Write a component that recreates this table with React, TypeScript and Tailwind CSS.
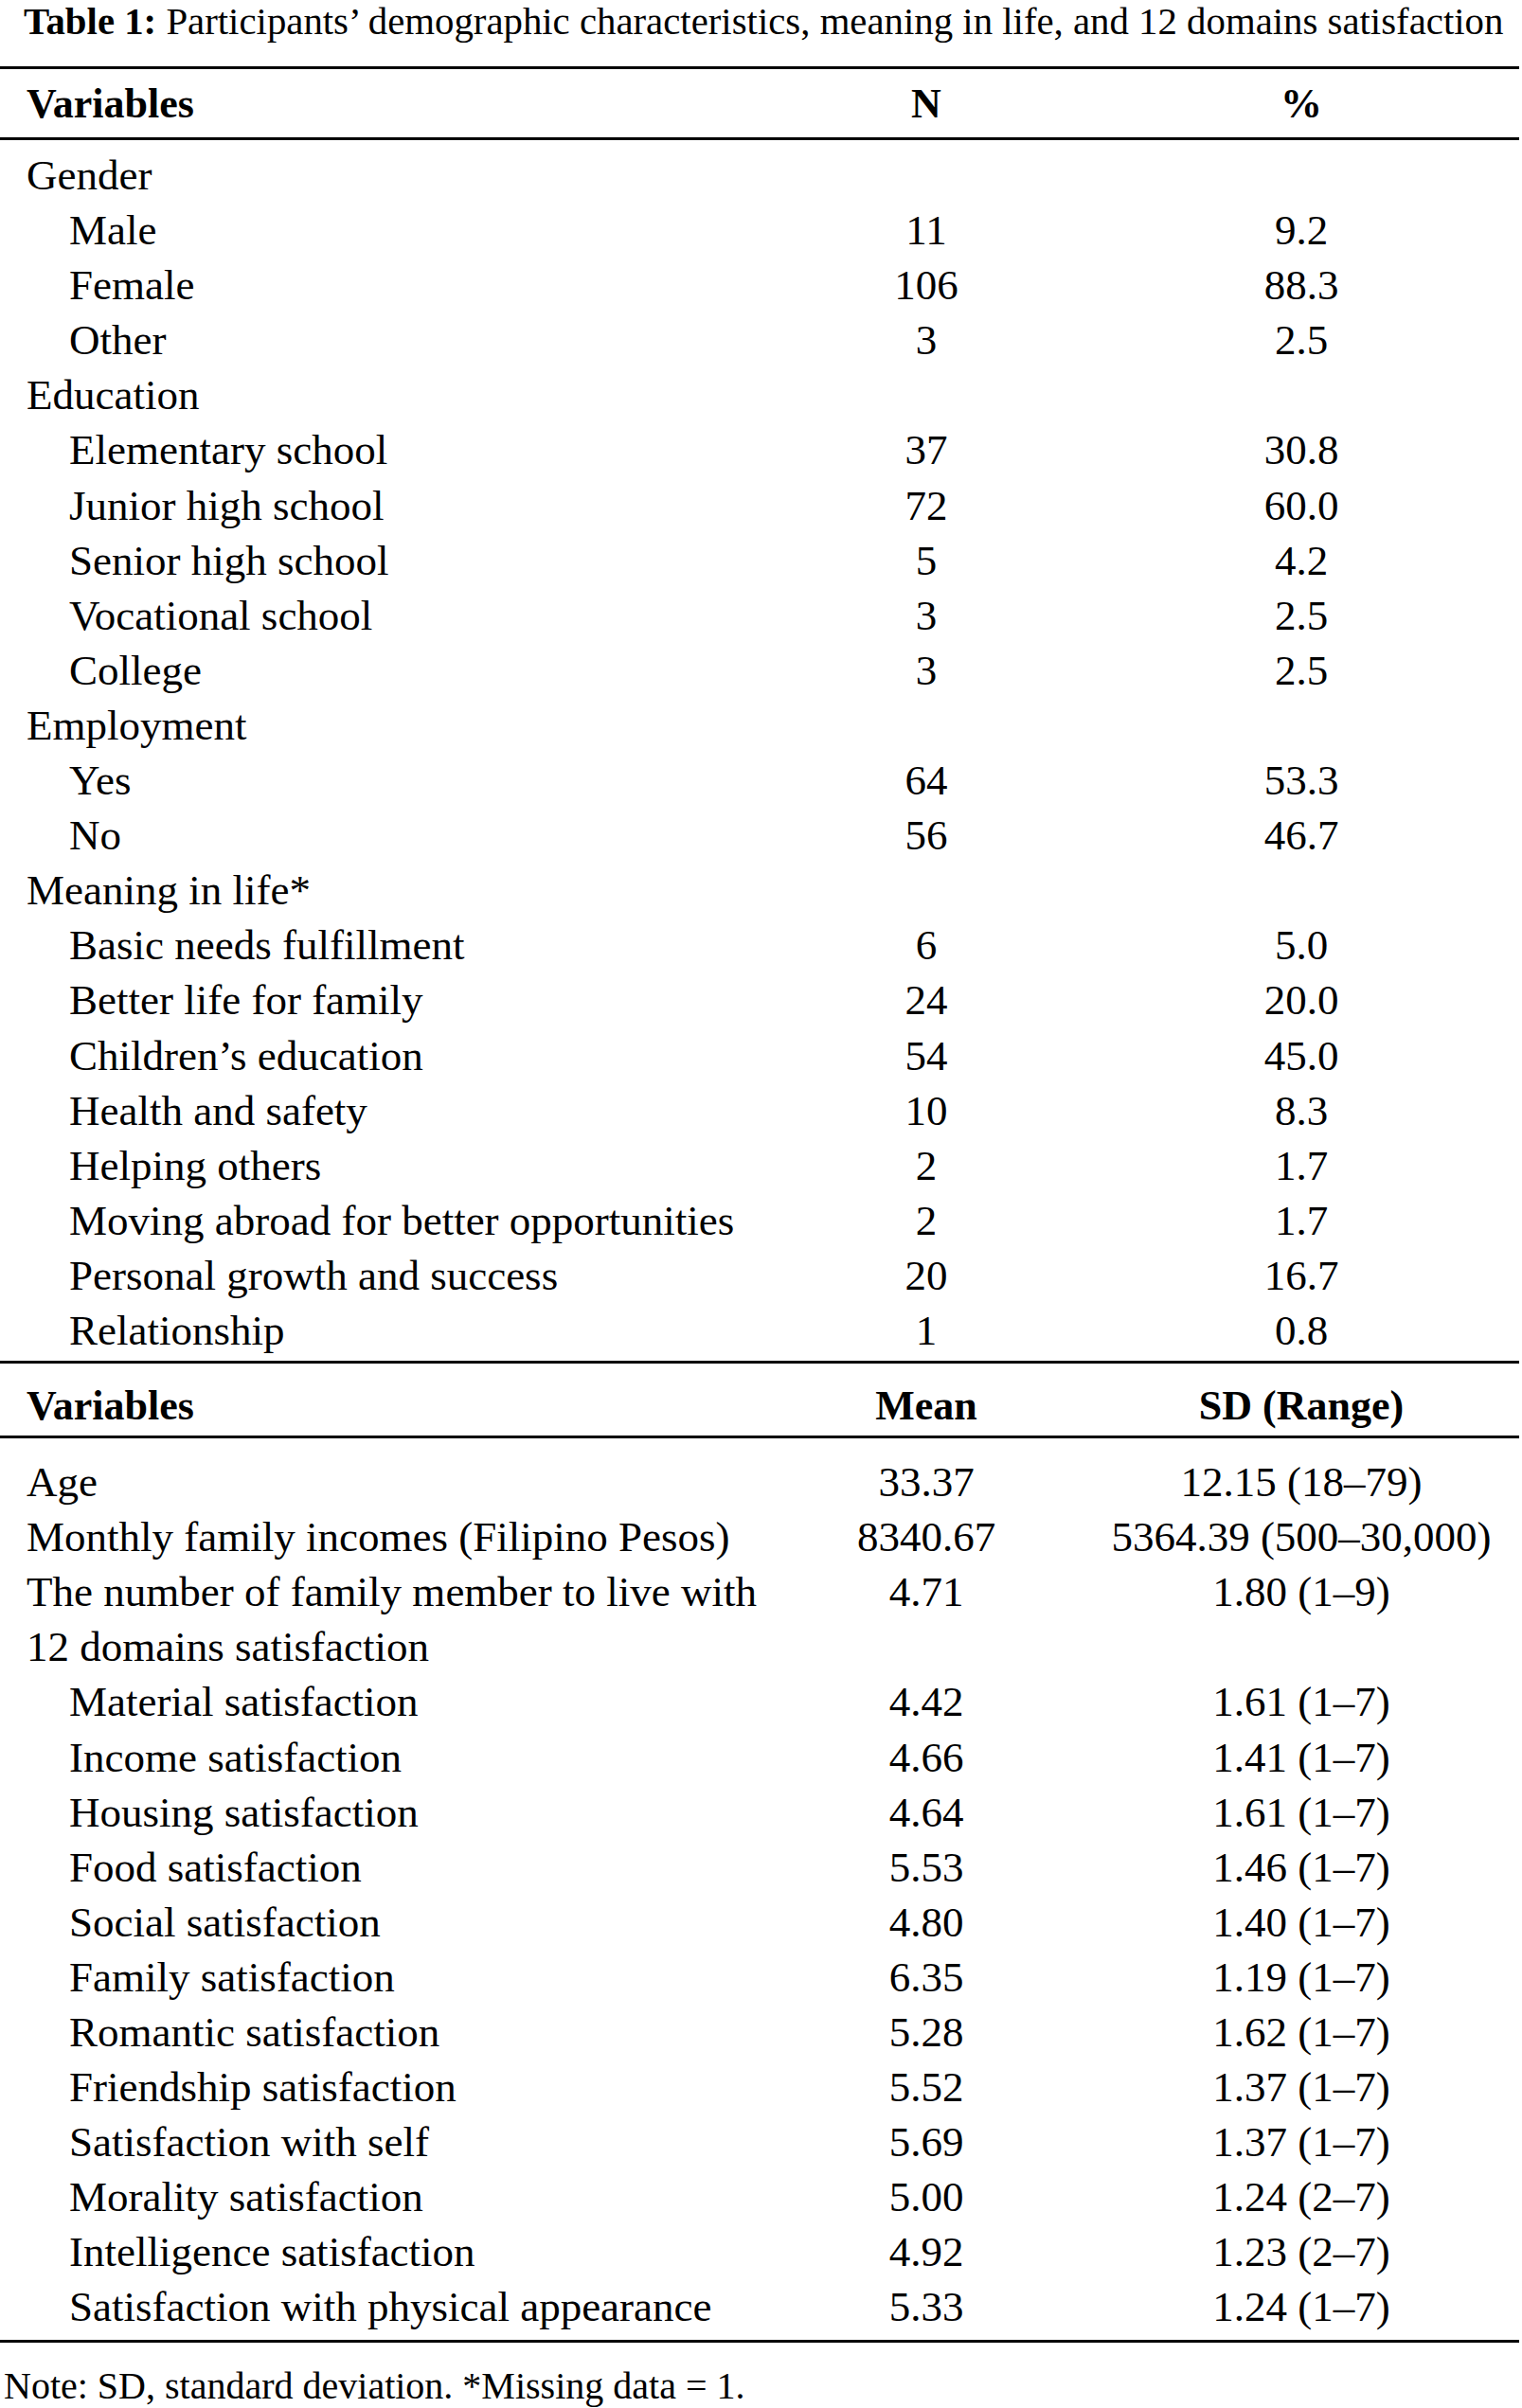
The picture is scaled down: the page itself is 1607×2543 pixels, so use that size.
type Row = { label: string; a?: string; b?: string; sub?: boolean };

const part1: Row[] = [
  { label: "Gender" },
  { label: "Male", a: "11", b: "9.2", sub: true },
  { label: "Female", a: "106", b: "88.3", sub: true },
  { label: "Other", a: "3", b: "2.5", sub: true },
  { label: "Education" },
  { label: "Elementary school", a: "37", b: "30.8", sub: true },
  { label: "Junior high school", a: "72", b: "60.0", sub: true },
  { label: "Senior high school", a: "5", b: "4.2", sub: true },
  { label: "Vocational school", a: "3", b: "2.5", sub: true },
  { label: "College", a: "3", b: "2.5", sub: true },
  { label: "Employment" },
  { label: "Yes", a: "64", b: "53.3", sub: true },
  { label: "No", a: "56", b: "46.7", sub: true },
  { label: "Meaning in life*" },
  { label: "Basic needs fulfillment", a: "6", b: "5.0", sub: true },
  { label: "Better life for family", a: "24", b: "20.0", sub: true },
  { label: "Children\u2019s education", a: "54", b: "45.0", sub: true },
  { label: "Health and safety", a: "10", b: "8.3", sub: true },
  { label: "Helping others", a: "2", b: "1.7", sub: true },
  { label: "Moving abroad for better opportunities", a: "2", b: "1.7", sub: true },
  { label: "Personal growth and success", a: "20", b: "16.7", sub: true },
  { label: "Relationship", a: "1", b: "0.8", sub: true },
];

const part2: Row[] = [
  { label: "Age", a: "33.37", b: "12.15 (18\u201379)" },
  { label: "Monthly family incomes (Filipino Pesos)", a: "8340.67", b: "5364.39 (500\u201330,000)" },
  { label: "The number of family member to live with", a: "4.71", b: "1.80 (1\u20139)" },
  { label: "12 domains satisfaction" },
  { label: "Material satisfaction", a: "4.42", b: "1.61 (1\u20137)", sub: true },
  { label: "Income satisfaction", a: "4.66", b: "1.41 (1\u20137)", sub: true },
  { label: "Housing satisfaction", a: "4.64", b: "1.61 (1\u20137)", sub: true },
  { label: "Food satisfaction", a: "5.53", b: "1.46 (1\u20137)", sub: true },
  { label: "Social satisfaction", a: "4.80", b: "1.40 (1\u20137)", sub: true },
  { label: "Family satisfaction", a: "6.35", b: "1.19 (1\u20137)", sub: true },
  { label: "Romantic satisfaction", a: "5.28", b: "1.62 (1\u20137)", sub: true },
  { label: "Friendship satisfaction", a: "5.52", b: "1.37 (1\u20137)", sub: true },
  { label: "Satisfaction with self", a: "5.69", b: "1.37 (1\u20137)", sub: true },
  { label: "Morality satisfaction", a: "5.00", b: "1.24 (2\u20137)", sub: true },
  { label: "Intelligence satisfaction", a: "4.92", b: "1.23 (2\u20137)", sub: true },
  { label: "Satisfaction with physical appearance", a: "5.33", b: "1.24 (1\u20137)", sub: true },
];

function Rule() {
  return <div className="h-[3px] w-[1604px] bg-black" />;
}

function Header({ a, b }: { a: string; b: string }) {
  return (
    <div className="grid grid-cols-[800px_356px_436px] text-[44px] font-bold leading-[58px]">
      <div className="pl-[28px]">Variables</div>
      <div className="text-center">{a}</div>
      <div className="text-center">{b}</div>
    </div>
  );
}

function Body({ rows }: { rows: Row[] }) {
  return (
    <div className="flex flex-col">
      {rows.map((r) => (
        <div key={r.label} className="grid grid-cols-[800px_356px_436px] text-[45px] leading-[58.1px]">
          <div className={(r.sub ? "pl-[73px]" : "pl-[28px]") + " whitespace-nowrap"}>{r.label}</div>
          <div className="text-center whitespace-nowrap">{r.a ?? ""}</div>
          <div className="text-center whitespace-nowrap">{r.b ?? ""}</div>
        </div>
      ))}
    </div>
  );
}

export default function App() {
  return (
    <div className="w-[1607px] h-[2543px] overflow-hidden bg-white text-black font-['Liberation_Serif',serif]">
      <div className="pl-[25px] text-[40.8px] leading-[46px] whitespace-nowrap">
        <span className="font-bold">Table 1:</span> Participants’ demographic characteristics, meaning in life, and 12 domains satisfaction
      </div>
      <div className="mt-[24px]">
        <Rule />
      </div>
      <div className="pt-[8px] pb-[6px]">
        <Header a="N" b="%" />
      </div>
      <Rule />
      <div className="pt-[8px] pb-[3px]">
        <Body rows={part1} />
      </div>
      <Rule />
      <div className="pt-[16px] pb-[2px]">
        <Header a="Mean" b="SD (Range)" />
      </div>
      <Rule />
      <div className="pt-[17px] pb-[5px]">
        <Body rows={part2} />
      </div>
      <Rule />
      <div className="mt-[26px] pl-[4px] text-[40px] leading-[40px] whitespace-nowrap">
        Note: SD, standard deviation. *Missing data = 1.
      </div>
    </div>
  );
}
